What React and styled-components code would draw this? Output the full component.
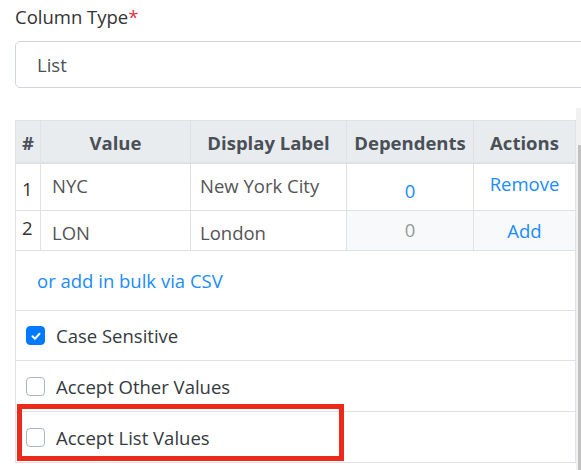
import React from "react";
import styled, { createGlobalStyle } from "styled-components";

const Global = createGlobalStyle`
  html, body { margin: 0; padding: 0; background: #fff; overflow: hidden; }
  body { font-family: "Open Sans", "Noto Sans", sans-serif; }
  * { box-sizing: border-box; }
`;

const Page = styled.div`
  width: 620px;
  font-size: 18.5px;
  color: #333;
`;

const Label = styled.div`
  margin: 3px 0 0 15px;
  height: 38px;
  line-height: 28px;
  color: #333;
`;

const Req = styled.span`
  color: #dc3545;
`;

const Select = styled.div`
  position: relative;
  margin-left: 15px;
  height: 47px;
  width: 600px;
  border: 1px solid #ced4da;
  border-radius: 5px;
  display: flex;
  align-items: center;
  padding: 0 0 1px 21px;
  color: #495057;
`;

const Caret = styled.svg`
  position: absolute;
  left: 565px;
  top: 20px;
`;

const Panel = styled.div`
  margin-top: 20px;
  display: flex;
  height: 362px;
`;

const Viewport = styled.div`
  width: 576px;
  overflow: hidden;
  padding: 12px 0 0 15px;
`;

const Track = styled.div`
  width: 15px;
  background: #f1f1f1;
  padding: 37px 0 0 2px;
`;

const Thumb = styled.div`
  height: 325px;
  background: #c1c1c1;
`;

const Card = styled.div`
  width: 561px;
  border: 1px solid #dee2e6;
`;

const Row = styled.div`
  display: grid;
  grid-template-columns: 25px 150px 156px 127px 101px;
  height: ${(p) => p.$h}px;
  border-bottom: ${(p) => p.$bb || 1}px solid #dee2e6;
`;

const HeadCell = styled.div`
  background: #e9ecef;
  border-right: 1px solid #dee2e6;
  font-weight: 700;
  color: #495057;
  font-size: 18.5px;
  display: flex;
  align-items: center;
  justify-content: center;
  padding-top: 1px;
  &:last-child { border-right: 0; }
`;

const Cell = styled.div`
  border-right: 1px solid #dee2e6;
  padding: ${(p) => p.$pt}px 0 0 ${(p) => (p.$center ? 0 : p.$pl ?? 10)}px;
  text-align: ${(p) => (p.$center ? "center" : "left")};
  line-height: 26px;
  color: ${(p) => p.$color || "#555"};
  background: ${(p) => p.$bg || "#fff"};
  &:last-child { border-right: 0; }
`;

const Link = styled.span`
  color: #1a8cff;
`;

const LinkRow = styled.div`
  height: 60px;
  border-bottom: 1px solid #dee2e6;
  display: flex;
  align-items: center;
  padding-left: 21px;
  padding-bottom: 1px;
  color: #1a8cff;
`;

const CheckRow = styled.div`
  position: relative;
  height: ${(p) => p.$h}px;
  border-bottom: ${(p) => (p.$last ? 0 : 1)}px solid #dee2e6;
  display: flex;
  align-items: center;
  padding-left: 10px;
  gap: 11px;
  color: #343a40;
`;

const Box = styled.span`
  width: 19px;
  height: 19px;
  border-radius: 4px;
  border: 1px solid ${(p) => (p.$on ? "#007bff" : "#adb5bd")};
  background: ${(p) => (p.$on ? "#007bff" : "#fff")};
  display: inline-flex;
  align-items: center;
  justify-content: center;
`;

const Highlight = styled.div`
  position: absolute;
  left: 1px;
  top: -8px;
  width: 327px;
  height: 57px;
  border: 5px solid #ec2a1b;
  pointer-events: none;
`;

function Check({ on, label, h, last, children }) {
  return (
    <CheckRow $h={h} $last={last}>
      <Box $on={on}>
        {on && (
          <svg width="12" height="12" viewBox="0 0 12 12">
            <path d="M2.5 6.3l2.4 2.4 4.6-5" fill="none" stroke="#fff" strokeWidth="2" strokeLinecap="round" strokeLinejoin="round" />
          </svg>
        )}
      </Box>
      <span>{label}</span>
      {children}
    </CheckRow>
  );
}

export default function App() {
  return (
    <>
      <Global />
      <Page>
        <Label>
          Column Type<Req>*</Req>
        </Label>
        <Select>
          List
          <Caret width="10" height="8" viewBox="0 0 10 8">
            <path d="M1 1l4 5 4-5" fill="none" stroke="#343a40" strokeWidth="1.6" />
          </Caret>
        </Select>
        <Panel>
          <Viewport>
            <Card>
              <Row $h={43} $bb={2}>
                <HeadCell>#</HeadCell>
                <HeadCell>Value</HeadCell>
                <HeadCell>Display Label</HeadCell>
                <HeadCell>Dependents</HeadCell>
                <HeadCell>Actions</HeadCell>
              </Row>
              <Row $h={47}>
                <Cell $pt={12} $pl={6} $color="#333">1</Cell>
                <Cell $pt={9} $pl={11}>NYC</Cell>
                <Cell $pt={9} $pl={9}>New York City</Cell>
                <Cell $pt={14} $center><Link>0</Link></Cell>
                <Cell $pt={7} $center><Link>Remove</Link></Cell>
              </Row>
              <Row $h={40}>
                <Cell $pt={4} $pl={6} $color="#333">2</Cell>
                <Cell $pt={9} $pl={11}>LON</Cell>
                <Cell $pt={9} $pl={9}>London</Cell>
                <Cell $pt={6} $center $color="#999" $bg="#f8f9fa">0</Cell>
                <Cell $pt={7} $center $bg="#f8f9fa"><Link>Add</Link></Cell>
              </Row>
              <LinkRow>or add in bulk via CSV</LinkRow>
              <Check on label="Case Sensitive" h={50} />
              <Check label="Accept Other Values" h={51} />
              <Check label="Accept List Values" h={50} last>
                <Highlight />
              </Check>
            </Card>
          </Viewport>
          <Track>
            <Thumb />
          </Track>
        </Panel>
      </Page>
    </>
  );
}
